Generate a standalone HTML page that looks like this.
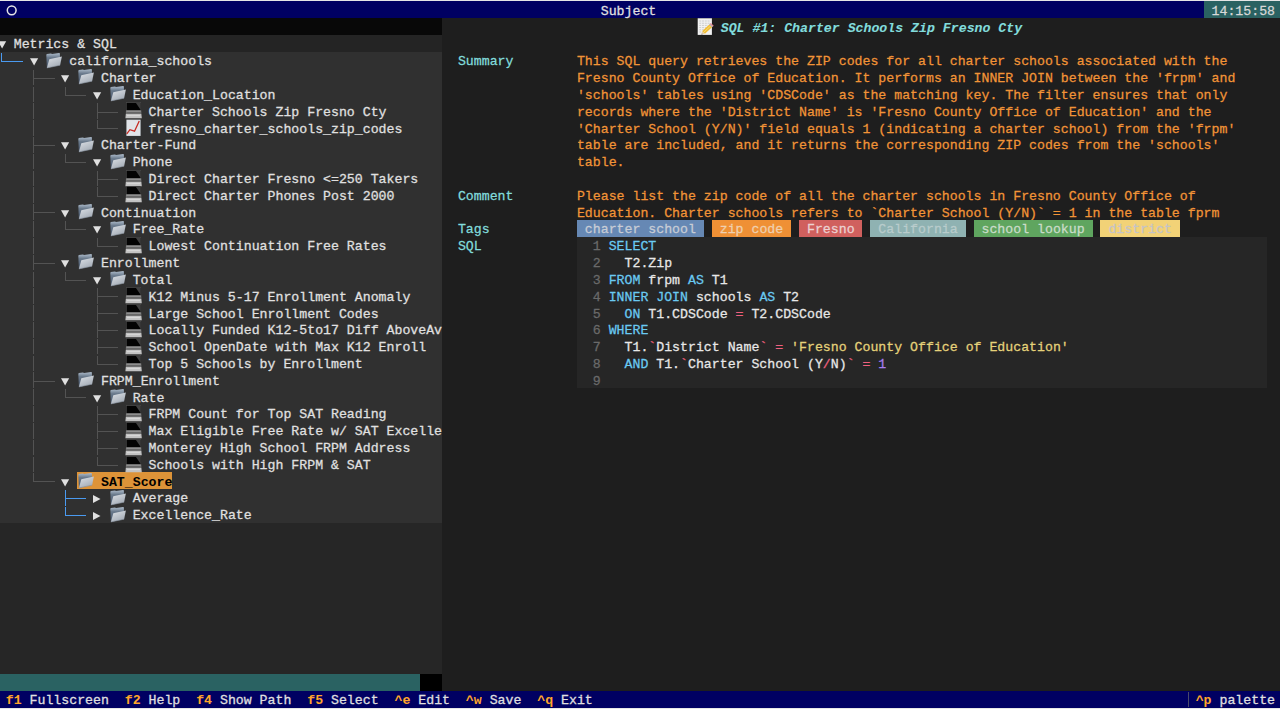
<!DOCTYPE html>
<html><head><meta charset="utf-8"><style>
*{margin:0;padding:0}
html,body{width:1280px;height:709px;overflow:hidden;background:#1e1e1e}
body{position:relative;font-family:"Liberation Mono",monospace}
.t{position:absolute;white-space:pre;font-size:13.2333px;line-height:16.817px;transform:scaleY(1.030);transform-origin:0 11.92px;-webkit-text-stroke:0.25px currentColor}
.b{font-weight:bold;-webkit-text-stroke:0}
.bi{font-weight:bold;font-style:italic;-webkit-text-stroke:0.1px currentColor}
</style></head><body>
<svg width="0" height="0" style="position:absolute"><defs>
<linearGradient id="fb" x1="0" y1="0" x2="0" y2="1"><stop offset="0" stop-color="#aebccb"/><stop offset="0.3" stop-color="#6a7a8c"/><stop offset="1" stop-color="#46546a"/></linearGradient>
<linearGradient id="ff" x1="0" y1="0" x2="0.6" y2="1"><stop offset="0" stop-color="#dfe3e8"/><stop offset="1" stop-color="#a4acb6"/></linearGradient>
<g id="fold">
 <path d="M0.3 1.7 L0.9 0.9 L5.0 0.5 L6.0 1.1 L13.2 0.1 L13.9 0.6 L14.0 11.6 L0.9 15.0 Z" fill="url(#fb)"/>
 <path d="M0.9 14.9 L3.3 6.3 L15.9 3.4 L14.1 12.2 Z" fill="url(#ff)"/>
 <path d="M0.9 14.9 L14.1 12.2" stroke="#8a94a0" stroke-width="0.6"/>
</g>
<g id="lap">
 <rect x="1.2" y="0" width="14.8" height="8.4" rx="0.6" fill="#5a5a5a"/>
 <rect x="1.6" y="0.7" width="14" height="7.4" fill="#030303"/>
 <path d="M10.8 0.7 L15.6 0.7 L15.6 7.8 Z" fill="#404040"/>
 <path d="M1.0 8.2 L16.2 8.2 L16.4 11.9 L0.8 11.9 Z" fill="#767676"/>
 <path d="M1.6 9.3 H15.6" stroke="#a0a0a0" stroke-width="0.7"/>
 <path d="M1.4 10.8 H15.8" stroke="#585858" stroke-width="0.7"/>
 <path d="M0.8 11.9 L16.4 11.9 L16.8 16.2 L0.4 16.2 Z" fill="#c2c2c2"/>
 <path d="M2 13.6 H15" stroke="#dadada" stroke-width="0.9"/>
</g>
<g id="chart">
 <rect x="0.4" y="0.6" width="14.2" height="16.4" fill="#c9cdd3"/>
 <rect x="0.9" y="1.1" width="13.2" height="15.2" fill="#e1e4e9"/>
 <path d="M0.74 14.9 L3.94 10.7 L8.54 12.2 L13.24 2.1" fill="none" stroke="#c62a22" stroke-width="1.3"/>
</g>
<g id="memo">
 <rect x="0.7" y="0.3" width="14.2" height="16.6" fill="#f2f2f2"/>
 <path d="M2.2 3H13.6M2.2 5.2H13.2M2.2 7.4H11M2.2 9.6H9M2.2 11.8H7M2.2 14H5" stroke="#bdbdbd" stroke-width="0.7" stroke-dasharray="2 0.8"/>
 <path d="M5.04 13.13 L12.54 6.13 L15.46 8.87 L7.96 15.87 Z" fill="#f1bd35"/>
 <path d="M6.5 14.5 L14 7.5" stroke="#f8dc70" stroke-width="1"/>
 <path d="M12.54 6.13 L13.84 4.93 L16.76 7.67 L15.46 8.87 Z" fill="#e98a92"/>
 <path d="M12.2 6.45 L12.9 5.8 L15.8 8.55 L15.1 9.2 Z" fill="#aab4c4"/>
 <path d="M5.04 13.13 L7.96 15.87 L4.5 16.6 Z" fill="#e6cfa6"/>
 <path d="M4.9 15.6 L5.6 16.3 L4.4 16.7 Z" fill="#444"/>
</g>
</defs></svg>
<div style="position:absolute;left:0.00px;top:0.00px;width:1280.00px;height:709.00px;background:#1e1e1e;"></div>
<div style="position:absolute;left:0.00px;top:0.00px;width:1280.00px;height:1.30px;background:#e6e6e6;"></div>
<div style="position:absolute;left:0.00px;top:707.61px;width:1280.00px;height:1.39px;background:#e6e6e6;"></div>
<div style="position:absolute;left:0.00px;top:1.30px;width:1280.00px;height:16.82px;background:#000062;"></div>
<div style="position:absolute;left:0.00px;top:18.12px;width:442.07px;height:16.82px;background:#080808;"></div>
<div style="position:absolute;left:0.00px;top:34.93px;width:442.07px;height:16.82px;background:#242424;"></div>
<div style="position:absolute;left:0.00px;top:51.75px;width:442.07px;height:470.88px;background:#303030;"></div>
<div style="position:absolute;left:0.00px;top:522.63px;width:442.07px;height:151.35px;background:#262626;"></div>
<div style="position:absolute;left:0.00px;top:673.98px;width:419.50px;height:16.82px;background:#2a6262;"></div>
<div style="position:absolute;left:419.50px;top:673.98px;width:22.57px;height:16.82px;background:#000000;"></div>
<div style="position:absolute;left:0.00px;top:690.80px;width:1280.00px;height:16.82px;background:#000062;"></div>
<svg style="position:absolute;left:0;top:0" width="24" height="20"><circle cx="11.7" cy="10.3" r="4.4" fill="none" stroke="#e6e6e6" stroke-width="1.5"/></svg>
<span class="t" style="left:600.73px;top:3.80px;color:#e0e0e0;">Subject</span>
<div style="position:absolute;left:1203.61px;top:1.30px;width:76.39px;height:16.82px;background:#2a6262;"></div>
<span class="t" style="left:1211.54px;top:3.80px;color:#d8d8d8;">14:15:58</span>
<span class="t b" style="left:5.77px;top:693.30px;color:#ffa62b;">f1</span>
<span class="t" style="left:29.57px;top:693.30px;color:#e0e0e0;">Fullscreen</span>
<span class="t b" style="left:124.76px;top:693.30px;color:#ffa62b;">f2</span>
<span class="t" style="left:148.56px;top:693.30px;color:#e0e0e0;">Help</span>
<span class="t b" style="left:196.16px;top:693.30px;color:#ffa62b;">f4</span>
<span class="t" style="left:219.96px;top:693.30px;color:#e0e0e0;">Show Path</span>
<span class="t b" style="left:307.22px;top:693.30px;color:#ffa62b;">f5</span>
<span class="t" style="left:331.01px;top:693.30px;color:#e0e0e0;">Select</span>
<span class="t b" style="left:394.47px;top:693.30px;color:#ffa62b;">^e</span>
<span class="t" style="left:418.27px;top:693.30px;color:#e0e0e0;">Edit</span>
<span class="t b" style="left:465.87px;top:693.30px;color:#ffa62b;">^w</span>
<span class="t" style="left:489.67px;top:693.30px;color:#e0e0e0;">Save</span>
<span class="t b" style="left:537.26px;top:693.30px;color:#ffa62b;">^q</span>
<span class="t" style="left:561.06px;top:693.30px;color:#e0e0e0;">Exit</span>
<div style="position:absolute;left:1187.94px;top:692.30px;width:1.00px;height:14.32px;background:#4a4a6a;"></div>
<span class="t b" style="left:1195.68px;top:693.30px;color:#ffa62b;">^p</span>
<span class="t" style="left:1219.48px;top:693.30px;color:#e0e0e0;">palette</span>
<span class="t" style="left:13.71px;top:37.43px;color:#e0e0e0;">Metrics &amp; SQL</span>
<span class="t" style="left:69.23px;top:54.25px;color:#e0e0e0;">california_schools</span>
<span class="t" style="left:100.97px;top:71.07px;color:#e0e0e0;">Charter</span>
<span class="t" style="left:132.70px;top:87.89px;color:#e0e0e0;">Education_Location</span>
<span class="t" style="left:148.56px;top:104.70px;color:#e0e0e0;">Charter Schools Zip Fresno Cty</span>
<span class="t" style="left:148.56px;top:121.52px;color:#e0e0e0;">fresno_charter_schools_zip_codes</span>
<span class="t" style="left:100.97px;top:138.34px;color:#e0e0e0;">Charter-Fund</span>
<span class="t" style="left:132.70px;top:155.15px;color:#e0e0e0;">Phone</span>
<span class="t" style="left:148.56px;top:171.97px;color:#e0e0e0;">Direct Charter Fresno &lt;=250 Takers</span>
<span class="t" style="left:148.56px;top:188.79px;color:#e0e0e0;">Direct Charter Phones Post 2000</span>
<span class="t" style="left:100.97px;top:205.60px;color:#e0e0e0;">Continuation</span>
<span class="t" style="left:132.70px;top:222.42px;color:#e0e0e0;">Free_Rate</span>
<span class="t" style="left:148.56px;top:239.24px;color:#e0e0e0;">Lowest Continuation Free Rates</span>
<span class="t" style="left:100.97px;top:256.06px;color:#e0e0e0;">Enrollment</span>
<span class="t" style="left:132.70px;top:272.87px;color:#e0e0e0;">Total</span>
<span class="t" style="left:148.56px;top:289.69px;color:#e0e0e0;">K12 Minus 5-17 Enrollment Anomaly</span>
<span class="t" style="left:148.56px;top:306.51px;color:#e0e0e0;">Large School Enrollment Codes</span>
<span class="t" style="left:148.56px;top:323.32px;color:#e0e0e0;">Locally Funded K12-5to17 Diff AboveAv</span>
<span class="t" style="left:148.56px;top:340.14px;color:#e0e0e0;">School OpenDate with Max K12 Enroll</span>
<span class="t" style="left:148.56px;top:356.96px;color:#e0e0e0;">Top 5 Schools by Enrollment</span>
<span class="t" style="left:100.97px;top:373.77px;color:#e0e0e0;">FRPM_Enrollment</span>
<span class="t" style="left:132.70px;top:390.59px;color:#e0e0e0;">Rate</span>
<span class="t" style="left:148.56px;top:407.41px;color:#e0e0e0;">FRPM Count for Top SAT Reading</span>
<span class="t" style="left:148.56px;top:424.23px;color:#e0e0e0;">Max Eligible Free Rate w/ SAT Excelle</span>
<span class="t" style="left:148.56px;top:441.04px;color:#e0e0e0;">Monterey High School FRPM Address</span>
<span class="t" style="left:148.56px;top:457.86px;color:#e0e0e0;">Schools with High FRPM &amp; SAT</span>
<div style="position:absolute;left:77.17px;top:472.18px;width:95.19px;height:16.82px;background:#dd9338;"></div>
<span class="t b" style="left:100.97px;top:474.68px;color:#000000;">SAT_Score</span>
<span class="t" style="left:132.70px;top:491.49px;color:#e0e0e0;">Average</span>
<span class="t" style="left:132.70px;top:508.31px;color:#e0e0e0;">Excellence_Rate</span>
<div style="position:absolute;left:1.34px;top:52.95px;width:1px;height:9.10px;background:#4a9af0"></div>
<div style="position:absolute;left:1.34px;top:61.05px;width:21.50px;height:1px;background:#4a9af0"></div>
<div style="position:absolute;left:33.07px;top:69.77px;width:1px;height:15.62px;background:#535353"></div>
<div style="position:absolute;left:33.07px;top:77.87px;width:21.50px;height:1px;background:#535353"></div>
<div style="position:absolute;left:33.07px;top:86.59px;width:1px;height:15.62px;background:#535353"></div>
<div style="position:absolute;left:64.80px;top:86.59px;width:1px;height:9.10px;background:#535353"></div>
<div style="position:absolute;left:64.80px;top:94.69px;width:21.50px;height:1px;background:#535353"></div>
<div style="position:absolute;left:33.07px;top:103.40px;width:1px;height:15.62px;background:#535353"></div>
<div style="position:absolute;left:96.53px;top:103.40px;width:1px;height:15.62px;background:#535353"></div>
<div style="position:absolute;left:96.53px;top:111.50px;width:21.50px;height:1px;background:#535353"></div>
<div style="position:absolute;left:33.07px;top:120.22px;width:1px;height:15.62px;background:#535353"></div>
<div style="position:absolute;left:96.53px;top:120.22px;width:1px;height:9.10px;background:#535353"></div>
<div style="position:absolute;left:96.53px;top:128.32px;width:21.50px;height:1px;background:#535353"></div>
<div style="position:absolute;left:33.07px;top:137.04px;width:1px;height:15.62px;background:#535353"></div>
<div style="position:absolute;left:33.07px;top:145.14px;width:21.50px;height:1px;background:#535353"></div>
<div style="position:absolute;left:33.07px;top:153.85px;width:1px;height:15.62px;background:#535353"></div>
<div style="position:absolute;left:64.80px;top:153.85px;width:1px;height:9.10px;background:#535353"></div>
<div style="position:absolute;left:64.80px;top:161.95px;width:21.50px;height:1px;background:#535353"></div>
<div style="position:absolute;left:33.07px;top:170.67px;width:1px;height:15.62px;background:#535353"></div>
<div style="position:absolute;left:96.53px;top:170.67px;width:1px;height:15.62px;background:#535353"></div>
<div style="position:absolute;left:96.53px;top:178.77px;width:21.50px;height:1px;background:#535353"></div>
<div style="position:absolute;left:33.07px;top:187.49px;width:1px;height:15.62px;background:#535353"></div>
<div style="position:absolute;left:96.53px;top:187.49px;width:1px;height:9.10px;background:#535353"></div>
<div style="position:absolute;left:96.53px;top:195.59px;width:21.50px;height:1px;background:#535353"></div>
<div style="position:absolute;left:33.07px;top:204.30px;width:1px;height:15.62px;background:#535353"></div>
<div style="position:absolute;left:33.07px;top:212.40px;width:21.50px;height:1px;background:#535353"></div>
<div style="position:absolute;left:33.07px;top:221.12px;width:1px;height:15.62px;background:#535353"></div>
<div style="position:absolute;left:64.80px;top:221.12px;width:1px;height:9.10px;background:#535353"></div>
<div style="position:absolute;left:64.80px;top:229.22px;width:21.50px;height:1px;background:#535353"></div>
<div style="position:absolute;left:33.07px;top:237.94px;width:1px;height:15.62px;background:#535353"></div>
<div style="position:absolute;left:96.53px;top:237.94px;width:1px;height:9.10px;background:#535353"></div>
<div style="position:absolute;left:96.53px;top:246.04px;width:21.50px;height:1px;background:#535353"></div>
<div style="position:absolute;left:33.07px;top:254.75px;width:1px;height:15.62px;background:#535353"></div>
<div style="position:absolute;left:33.07px;top:262.86px;width:21.50px;height:1px;background:#535353"></div>
<div style="position:absolute;left:33.07px;top:271.57px;width:1px;height:15.62px;background:#535353"></div>
<div style="position:absolute;left:64.80px;top:271.57px;width:1px;height:9.10px;background:#535353"></div>
<div style="position:absolute;left:64.80px;top:279.67px;width:21.50px;height:1px;background:#535353"></div>
<div style="position:absolute;left:33.07px;top:288.39px;width:1px;height:15.62px;background:#535353"></div>
<div style="position:absolute;left:96.53px;top:288.39px;width:1px;height:15.62px;background:#535353"></div>
<div style="position:absolute;left:96.53px;top:296.49px;width:21.50px;height:1px;background:#535353"></div>
<div style="position:absolute;left:33.07px;top:305.21px;width:1px;height:15.62px;background:#535353"></div>
<div style="position:absolute;left:96.53px;top:305.21px;width:1px;height:15.62px;background:#535353"></div>
<div style="position:absolute;left:96.53px;top:313.31px;width:21.50px;height:1px;background:#535353"></div>
<div style="position:absolute;left:33.07px;top:322.02px;width:1px;height:15.62px;background:#535353"></div>
<div style="position:absolute;left:96.53px;top:322.02px;width:1px;height:15.62px;background:#535353"></div>
<div style="position:absolute;left:96.53px;top:330.12px;width:21.50px;height:1px;background:#535353"></div>
<div style="position:absolute;left:33.07px;top:338.84px;width:1px;height:15.62px;background:#535353"></div>
<div style="position:absolute;left:96.53px;top:338.84px;width:1px;height:15.62px;background:#535353"></div>
<div style="position:absolute;left:96.53px;top:346.94px;width:21.50px;height:1px;background:#535353"></div>
<div style="position:absolute;left:33.07px;top:355.66px;width:1px;height:15.62px;background:#535353"></div>
<div style="position:absolute;left:96.53px;top:355.66px;width:1px;height:9.10px;background:#535353"></div>
<div style="position:absolute;left:96.53px;top:363.76px;width:21.50px;height:1px;background:#535353"></div>
<div style="position:absolute;left:33.07px;top:372.47px;width:1px;height:15.62px;background:#535353"></div>
<div style="position:absolute;left:33.07px;top:380.57px;width:21.50px;height:1px;background:#535353"></div>
<div style="position:absolute;left:33.07px;top:389.29px;width:1px;height:15.62px;background:#535353"></div>
<div style="position:absolute;left:64.80px;top:389.29px;width:1px;height:9.10px;background:#535353"></div>
<div style="position:absolute;left:64.80px;top:397.39px;width:21.50px;height:1px;background:#535353"></div>
<div style="position:absolute;left:33.07px;top:406.11px;width:1px;height:15.62px;background:#535353"></div>
<div style="position:absolute;left:96.53px;top:406.11px;width:1px;height:15.62px;background:#535353"></div>
<div style="position:absolute;left:96.53px;top:414.21px;width:21.50px;height:1px;background:#535353"></div>
<div style="position:absolute;left:33.07px;top:422.93px;width:1px;height:15.62px;background:#535353"></div>
<div style="position:absolute;left:96.53px;top:422.93px;width:1px;height:15.62px;background:#535353"></div>
<div style="position:absolute;left:96.53px;top:431.03px;width:21.50px;height:1px;background:#535353"></div>
<div style="position:absolute;left:33.07px;top:439.74px;width:1px;height:15.62px;background:#535353"></div>
<div style="position:absolute;left:96.53px;top:439.74px;width:1px;height:15.62px;background:#535353"></div>
<div style="position:absolute;left:96.53px;top:447.84px;width:21.50px;height:1px;background:#535353"></div>
<div style="position:absolute;left:33.07px;top:456.56px;width:1px;height:15.62px;background:#535353"></div>
<div style="position:absolute;left:96.53px;top:456.56px;width:1px;height:9.10px;background:#535353"></div>
<div style="position:absolute;left:96.53px;top:464.66px;width:21.50px;height:1px;background:#535353"></div>
<div style="position:absolute;left:33.07px;top:473.38px;width:1px;height:9.10px;background:#535353"></div>
<div style="position:absolute;left:33.07px;top:481.48px;width:21.50px;height:1px;background:#535353"></div>
<div style="position:absolute;left:64.80px;top:490.19px;width:1px;height:15.62px;background:#4a9af0"></div>
<div style="position:absolute;left:64.80px;top:498.29px;width:21.50px;height:1px;background:#4a9af0"></div>
<div style="position:absolute;left:64.80px;top:507.01px;width:1px;height:9.10px;background:#4a9af0"></div>
<div style="position:absolute;left:64.80px;top:515.11px;width:21.50px;height:1px;background:#4a9af0"></div>
<svg style="position:absolute;left:-2.26px;top:41.43px" width="9" height="8"><path d="M0 0.2H8.2L4.1 7.4Z" fill="#e0e0e0"/></svg>
<svg style="position:absolute;left:29.57px;top:58.25px" width="9" height="8"><path d="M0 0.2H8.2L4.1 7.4Z" fill="#e0e0e0"/></svg>
<svg style="position:absolute;left:46.44px;top:52.65px" width="17" height="16"><use href="#fold"/></svg>
<svg style="position:absolute;left:61.30px;top:75.07px" width="9" height="8"><path d="M0 0.2H8.2L4.1 7.4Z" fill="#e0e0e0"/></svg>
<svg style="position:absolute;left:78.17px;top:69.47px" width="17" height="16"><use href="#fold"/></svg>
<svg style="position:absolute;left:93.03px;top:91.89px" width="9" height="8"><path d="M0 0.2H8.2L4.1 7.4Z" fill="#e0e0e0"/></svg>
<svg style="position:absolute;left:109.90px;top:86.29px" width="17" height="16"><use href="#fold"/></svg>
<svg style="position:absolute;left:125.36px;top:102.40px" width="18" height="17"><use href="#lap"/></svg>
<svg style="position:absolute;left:126.36px;top:119.32px" width="16" height="18"><use href="#chart"/></svg>
<svg style="position:absolute;left:61.30px;top:142.34px" width="9" height="8"><path d="M0 0.2H8.2L4.1 7.4Z" fill="#e0e0e0"/></svg>
<svg style="position:absolute;left:78.17px;top:136.74px" width="17" height="16"><use href="#fold"/></svg>
<svg style="position:absolute;left:93.03px;top:159.15px" width="9" height="8"><path d="M0 0.2H8.2L4.1 7.4Z" fill="#e0e0e0"/></svg>
<svg style="position:absolute;left:109.90px;top:153.55px" width="17" height="16"><use href="#fold"/></svg>
<svg style="position:absolute;left:125.36px;top:169.67px" width="18" height="17"><use href="#lap"/></svg>
<svg style="position:absolute;left:125.36px;top:186.49px" width="18" height="17"><use href="#lap"/></svg>
<svg style="position:absolute;left:61.30px;top:209.60px" width="9" height="8"><path d="M0 0.2H8.2L4.1 7.4Z" fill="#e0e0e0"/></svg>
<svg style="position:absolute;left:78.17px;top:204.00px" width="17" height="16"><use href="#fold"/></svg>
<svg style="position:absolute;left:93.03px;top:226.42px" width="9" height="8"><path d="M0 0.2H8.2L4.1 7.4Z" fill="#e0e0e0"/></svg>
<svg style="position:absolute;left:109.90px;top:220.82px" width="17" height="16"><use href="#fold"/></svg>
<svg style="position:absolute;left:125.36px;top:236.94px" width="18" height="17"><use href="#lap"/></svg>
<svg style="position:absolute;left:61.30px;top:260.06px" width="9" height="8"><path d="M0 0.2H8.2L4.1 7.4Z" fill="#e0e0e0"/></svg>
<svg style="position:absolute;left:78.17px;top:254.46px" width="17" height="16"><use href="#fold"/></svg>
<svg style="position:absolute;left:93.03px;top:276.87px" width="9" height="8"><path d="M0 0.2H8.2L4.1 7.4Z" fill="#e0e0e0"/></svg>
<svg style="position:absolute;left:109.90px;top:271.27px" width="17" height="16"><use href="#fold"/></svg>
<svg style="position:absolute;left:125.36px;top:287.39px" width="18" height="17"><use href="#lap"/></svg>
<svg style="position:absolute;left:125.36px;top:304.21px" width="18" height="17"><use href="#lap"/></svg>
<svg style="position:absolute;left:125.36px;top:321.02px" width="18" height="17"><use href="#lap"/></svg>
<svg style="position:absolute;left:125.36px;top:337.84px" width="18" height="17"><use href="#lap"/></svg>
<svg style="position:absolute;left:125.36px;top:354.66px" width="18" height="17"><use href="#lap"/></svg>
<svg style="position:absolute;left:61.30px;top:377.77px" width="9" height="8"><path d="M0 0.2H8.2L4.1 7.4Z" fill="#e0e0e0"/></svg>
<svg style="position:absolute;left:78.17px;top:372.17px" width="17" height="16"><use href="#fold"/></svg>
<svg style="position:absolute;left:93.03px;top:394.59px" width="9" height="8"><path d="M0 0.2H8.2L4.1 7.4Z" fill="#e0e0e0"/></svg>
<svg style="position:absolute;left:109.90px;top:388.99px" width="17" height="16"><use href="#fold"/></svg>
<svg style="position:absolute;left:125.36px;top:405.11px" width="18" height="17"><use href="#lap"/></svg>
<svg style="position:absolute;left:125.36px;top:421.93px" width="18" height="17"><use href="#lap"/></svg>
<svg style="position:absolute;left:125.36px;top:438.74px" width="18" height="17"><use href="#lap"/></svg>
<svg style="position:absolute;left:125.36px;top:455.56px" width="18" height="17"><use href="#lap"/></svg>
<svg style="position:absolute;left:61.30px;top:478.68px" width="9" height="8"><path d="M0 0.2H8.2L4.1 7.4Z" fill="#e0e0e0"/></svg>
<svg style="position:absolute;left:78.17px;top:473.08px" width="17" height="16"><use href="#fold"/></svg>
<svg style="position:absolute;left:93.43px;top:495.49px" width="8" height="9"><path d="M0 0V8L7.5 4Z" fill="#e0e0e0"/></svg>
<svg style="position:absolute;left:109.90px;top:489.89px" width="17" height="16"><use href="#fold"/></svg>
<svg style="position:absolute;left:93.43px;top:512.31px" width="8" height="9"><path d="M0 0V8L7.5 4Z" fill="#e0e0e0"/></svg>
<svg style="position:absolute;left:109.90px;top:506.71px" width="17" height="16"><use href="#fold"/></svg>
<span class="t bi" style="left:719.72px;top:20.62px;color:#82dcdc;margin-left:1px">SQL #1: Charter Schools Zip Fresno Cty</span>
<span class="t" style="left:457.94px;top:54.25px;color:#82dcdc;">Summary</span>
<span class="t" style="left:576.93px;top:54.25px;color:#f29437;">This SQL query retrieves the ZIP codes for all charter schools associated with the</span>
<span class="t" style="left:576.93px;top:71.07px;color:#f29437;">Fresno County Office of Education. It performs an INNER JOIN between the &#x27;frpm&#x27; and</span>
<span class="t" style="left:576.93px;top:87.89px;color:#f29437;">&#x27;schools&#x27; tables using &#x27;CDSCode&#x27; as the matching key. The filter ensures that only</span>
<span class="t" style="left:576.93px;top:104.70px;color:#f29437;">records where the &#x27;District Name&#x27; is &#x27;Fresno County Office of Education&#x27; and the</span>
<span class="t" style="left:576.93px;top:121.52px;color:#f29437;">&#x27;Charter School (Y/N)&#x27; field equals 1 (indicating a charter school) from the &#x27;frpm&#x27;</span>
<span class="t" style="left:576.93px;top:138.34px;color:#f29437;">table are included, and it returns the corresponding ZIP codes from the &#x27;schools&#x27;</span>
<span class="t" style="left:576.93px;top:155.15px;color:#f29437;">table.</span>
<span class="t" style="left:457.94px;top:188.79px;color:#82dcdc;">Comment</span>
<span class="t" style="left:576.93px;top:188.79px;color:#f29437;">Please list the zip code of all the charter schools in Fresno County Office of</span>
<span class="t" style="left:576.93px;top:205.60px;color:#f29437;">Education. Charter schools refers to `Charter School (Y/N)` = 1 in the table fprm</span>
<span class="t" style="left:457.94px;top:222.42px;color:#82dcdc;">Tags</span>
<div style="position:absolute;left:576.93px;top:220.12px;width:126.92px;height:16.62px;background:#6688b4;"></div>
<span class="t" style="left:584.86px;top:222.42px;color:#c8cdd6;">charter school</span>
<div style="position:absolute;left:711.78px;top:220.12px;width:79.33px;height:16.62px;background:#ef9035;"></div>
<span class="t" style="left:719.72px;top:222.42px;color:#f0d0b0;">zip code</span>
<div style="position:absolute;left:799.04px;top:220.12px;width:63.46px;height:16.62px;background:#d0605e;"></div>
<span class="t" style="left:806.98px;top:222.42px;color:#ecd2d2;">Fresno</span>
<div style="position:absolute;left:870.44px;top:220.12px;width:95.19px;height:16.62px;background:#8fb2b2;"></div>
<span class="t" style="left:878.37px;top:222.42px;color:#b9cccc;">California</span>
<div style="position:absolute;left:973.56px;top:220.12px;width:118.99px;height:16.62px;background:#5fa55f;"></div>
<span class="t" style="left:981.49px;top:222.42px;color:#cadcca;">school lookup</span>
<div style="position:absolute;left:1100.49px;top:220.12px;width:79.33px;height:16.62px;background:#f2d277;"></div>
<span class="t" style="left:1108.42px;top:222.42px;color:#c4c3c8;">district</span>
<span class="t" style="left:457.94px;top:239.24px;color:#82dcdc;">SQL</span>
<div style="position:absolute;left:576.93px;top:236.74px;width:690.14px;height:151.35px;background:#262626;"></div>
<span class="t" style="left:592.79px;top:239.24px;color:#6a6a6a;">1</span>
<span class="t" style="left:608.66px;top:239.24px;color:#6acaf2;">SELECT</span>
<span class="t" style="left:592.79px;top:256.06px;color:#6a6a6a;">2</span>
<span class="t" style="left:608.66px;top:256.06px;color:#e8e8e8;">  T2.Zip</span>
<span class="t" style="left:592.79px;top:272.87px;color:#6a6a6a;">3</span>
<span class="t" style="left:608.66px;top:272.87px;color:#6acaf2;">FROM</span>
<span class="t" style="left:640.39px;top:272.87px;color:#e8e8e8;"> frpm </span>
<span class="t" style="left:687.98px;top:272.87px;color:#6acaf2;">AS</span>
<span class="t" style="left:703.85px;top:272.87px;color:#e8e8e8;"> T1</span>
<span class="t" style="left:592.79px;top:289.69px;color:#6a6a6a;">4</span>
<span class="t" style="left:608.66px;top:289.69px;color:#6acaf2;">INNER JOIN</span>
<span class="t" style="left:687.98px;top:289.69px;color:#e8e8e8;"> schools </span>
<span class="t" style="left:759.38px;top:289.69px;color:#6acaf2;">AS</span>
<span class="t" style="left:775.24px;top:289.69px;color:#e8e8e8;"> T2</span>
<span class="t" style="left:592.79px;top:306.51px;color:#6a6a6a;">5</span>
<span class="t" style="left:624.52px;top:306.51px;color:#6acaf2;">ON</span>
<span class="t" style="left:640.39px;top:306.51px;color:#e8e8e8;"> T1.CDSCode </span>
<span class="t" style="left:735.58px;top:306.51px;color:#f0607e;">=</span>
<span class="t" style="left:743.51px;top:306.51px;color:#e8e8e8;"> T2.CDSCode</span>
<span class="t" style="left:592.79px;top:323.32px;color:#6a6a6a;">6</span>
<span class="t" style="left:608.66px;top:323.32px;color:#6acaf2;">WHERE</span>
<span class="t" style="left:592.79px;top:340.14px;color:#6a6a6a;">7</span>
<span class="t" style="left:608.66px;top:340.14px;color:#e8e8e8;">  T1.</span>
<span class="t" style="left:648.32px;top:340.14px;color:#f0607e;">`</span>
<span class="t" style="left:656.25px;top:340.14px;color:#e8e8e8;">District Name</span>
<span class="t" style="left:759.38px;top:340.14px;color:#f0607e;">`</span>
<span class="t" style="left:775.24px;top:340.14px;color:#f0607e;">=</span>
<span class="t" style="left:791.11px;top:340.14px;color:#e5d27a;">&#x27;Fresno County Office of Education&#x27;</span>
<span class="t" style="left:592.79px;top:356.96px;color:#6a6a6a;">8</span>
<span class="t" style="left:624.52px;top:356.96px;color:#6acaf2;">AND</span>
<span class="t" style="left:648.32px;top:356.96px;color:#e8e8e8;"> T1.</span>
<span class="t" style="left:680.05px;top:356.96px;color:#f0607e;">`</span>
<span class="t" style="left:687.98px;top:356.96px;color:#e8e8e8;">Charter School (Y</span>
<span class="t" style="left:822.84px;top:356.96px;color:#f0607e;">/</span>
<span class="t" style="left:830.77px;top:356.96px;color:#e8e8e8;">N)</span>
<span class="t" style="left:846.64px;top:356.96px;color:#f0607e;">`</span>
<span class="t" style="left:862.50px;top:356.96px;color:#f0607e;">=</span>
<span class="t" style="left:878.37px;top:356.96px;color:#a77df0;">1</span>
<span class="t" style="left:592.79px;top:373.77px;color:#6a6a6a;">9</span>
<svg style="position:absolute;left:697.12px;top:17.82px" width="18" height="18"><use href="#memo"/></svg>
</body></html>
